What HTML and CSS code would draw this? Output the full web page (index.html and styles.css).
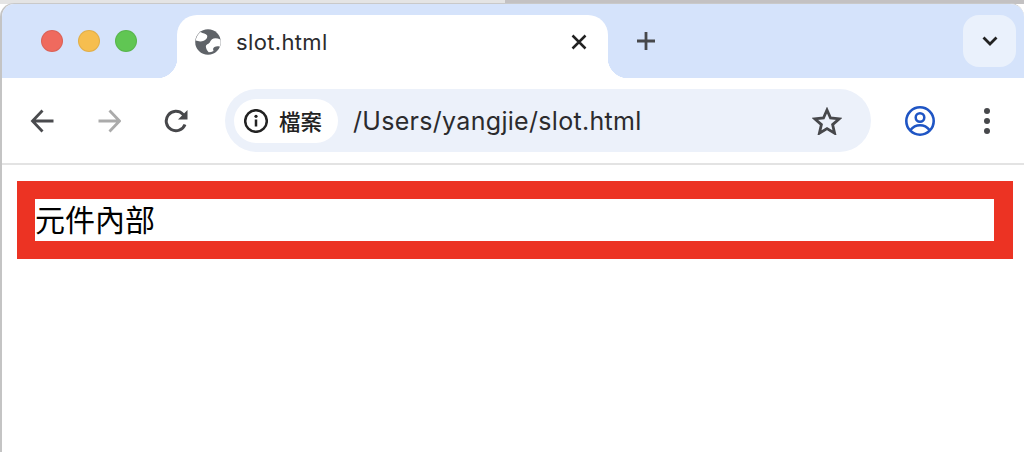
FILE: index.html
```html
<!DOCTYPE html>
<html lang="en">
<head>
    <meta charset="UTF-8">
    <meta name="viewport" content="width=device-width, initial-scale=1.0">
    <title>slot.html</title>
    <link rel="stylesheet" href="styles.css">
</head>
<body>
    <div class="desktop-edge"><span class="edge-light"></span><span class="edge-dark"></span></div>
    <div class="window">
        <div class="tabstrip">
            <div class="traffic">
                <span class="light red"></span>
                <span class="light yellow"></span>
                <span class="light green"></span>
            </div>
            <div class="tab">
                <svg class="globe" width="26" height="26" viewBox="0 0 26 26">
                    <circle cx="13" cy="13" r="12.8" fill="#5f6368"/>
                    <path d="M5.500 3c2.500 1.700 5.400 1.300 6.500 3.300 1 1.900-.8 4.600-3.200 5.500-2.500.9-5.300.8-8.100-.2C1.200 8 2.900 5 5.500 3z" fill="#fff"/>
                    <path d="M25.400 10.500c-3-1.400-6.400-1.700-8.400-.3-2 1.400-1.500 3.400-3.600 4.500-1.500.8-2.800 1.400-2.500 3.300.2 1.700 1.300 3.600 2.800 5.300 1.700-.1 3.300-.6 4.800-1.400-.7-1.800-.4-3 1-3.800 1.500-.9 3.500-1 5.300-.4 1-2.300 1.100-4.900.6-7.200z" fill="#fff"/>
                </svg>
                <span class="tab-title">slot.html</span>
                <svg class="tab-close" width="16" height="16" viewBox="0 0 16 16">
                    <path d="M1.500 1.500l13 13M14.500 1.500l-13 13" stroke="#222" stroke-width="2.500" fill="none"/>
                </svg>
            </div>
            <svg class="new-tab" width="20" height="20" viewBox="0 0 20 20">
                <path d="M10 1v18M1 10h18" stroke="#47484b" stroke-width="2.800" fill="none"/>
            </svg>
            <div class="tab-search">
                <svg width="16" height="10" viewBox="0 0 16 10">
                    <path d="M1.500 1.500L8 8l6.500-6.500" stroke="#222" stroke-width="2.800" fill="none"/>
                </svg>
            </div>
        </div>
        <div class="toolbar">
            <svg class="nav-btn" width="24" height="24" viewBox="0 0 24 24">
                <path d="M23.500 12H3M12.500 1.500L2.500 12l10 10.500" stroke="#4a4b4e" stroke-width="2.800" fill="none"/>
            </svg>
            <svg class="nav-btn" width="24" height="24" viewBox="0 0 24 24">
                <path d="M1.500 12H22M12.500 1.500l10 10.500-10 10.500" stroke="#ababab" stroke-width="2.800" fill="none"/>
            </svg>
            <svg class="nav-btn" width="24" height="24" viewBox="0 0 24 24">
                <path d="M21 15.500A9.700 9.700 0 1 1 18.900 5.300L21 7.800" stroke="#47484b" stroke-width="3" fill="none"/>
                <path d="M23.500 1V10.500h-9.500z" fill="#47484b"/>
            </svg>
            <div class="omnibox">
                <div class="site-chip">
                    <svg width="24" height="24" viewBox="0 0 24 24">
                        <circle cx="12" cy="12" r="10.800" stroke="#222" stroke-width="2.500" fill="none"/>
                        <path d="M12 10.500v7" stroke="#222" stroke-width="2.500"/>
                        <circle cx="12" cy="7.300" r="1.600" fill="#222"/>
                    </svg>
                    <span class="chip-label">檔案</span>
                </div>
                <span class="url">/Users/yangjie/slot.html</span>
                <svg class="star" width="30" height="28" viewBox="0 0 30 28">
                    <path d="M15 3l3.500 8 8.800.8-6.700 5.800 2 8.600L15 21.600l-7.600 4.600 2-8.600-6.700-5.800 8.800-.8z" stroke="#47484b" stroke-width="2.800" stroke-linejoin="miter" fill="none"/>
                </svg>
            </div>
            <svg class="profile" width="30" height="30" viewBox="0 0 30 30">
                <circle cx="15" cy="15" r="13.700" stroke="#1f55c4" stroke-width="2.600" fill="none"/>
                <circle cx="15" cy="11.500" r="4.300" stroke="#1f55c4" stroke-width="2.500" fill="none"/>
                <path d="M5.500 24c2.500-3.300 5.800-4.800 9.500-4.800s7 1.500 9.500 4.800" stroke="#1f55c4" stroke-width="2.500" fill="none"/>
            </svg>
            <div class="menu-dots"><span></span><span></span><span></span></div>
        </div>
        <main class="page">
            <div class="outer">
                <div class="inner">元件內部</div>
            </div>
        </main>
    </div>
</body>
</html>
```

FILE: styles.css
```css
html, body {
    margin: 0;
    padding: 0;
    height: 452px;
    overflow: hidden;
    background-color: #fff;
    font-family: "Liberation Sans", Arial, sans-serif;
}

.desktop-edge {
    display: flex;
    height: 4px;
    margin-bottom: -1px;
}

.edge-light {
    width: 505px;
    background-color: #e4e4e4;
}

.edge-dark {
    flex: 1;
    background-color: #c3c1c2;
}

.window {
    position: relative;
    height: 449px;
    box-sizing: border-box;
    border-top: 1px solid #c9c9c9;
    border-left: 2px solid #c4c4c4;
    border-radius: 14px 14px 0 0;
    overflow: hidden;
    background-color: #fff;
}

/* tabs */
.tabstrip {
    display: flex;
    align-items: flex-start;
    height: 74px;
    padding-top: 11px;
    box-sizing: border-box;
    background-color: #d5e3fb;
}

.traffic {
    display: flex;
    gap: 15px;
    width: 175px;
    padding: 15px 0 0 39px;
    box-sizing: border-box;
}

.light {
    width: 22px;
    height: 22px;
    border-radius: 50%;
    box-sizing: border-box;
    border: 1px solid rgba(0, 0, 0, 0.08);
}

.red { background-color: #ef6a5e; }
.yellow { background-color: #f6be4f; }
.green { background-color: #60c653; }

.tab {
    display: flex;
    align-items: center;
    width: 431px;
    height: 63px;
    padding: 0 21px 10px 18px;
    box-sizing: border-box;
    background-color: #fff;
    border-radius: 20px 20px 0 0;
    position: relative;
}

.tab::before, .tab::after {
    content: "";
    position: absolute;
    bottom: 0;
    width: 20px;
    height: 20px;
}

.tab::before {
    left: -20px;
    background: radial-gradient(circle at 0 0, #d5e3fb 20px, #fff 20.5px);
}

.tab::after {
    right: -20px;
    background: radial-gradient(circle at 100% 0, #d5e3fb 20px, #fff 20.5px);
}

.tab-title {
    flex: 1;
    margin-left: 15px;
    font-family: Inter, sans-serif;
    font-size: 22px;
    letter-spacing: 0.35px;
    color: #2b2b2d;
}

.new-tab {
    margin: 16px 0 0 28px;
}

.tab-search {
    display: flex;
    align-items: center;
    justify-content: center;
    width: 53px;
    height: 52px;
    margin-left: auto;
    margin-right: 8px;
    background-color: #eaf1fc;
    border-radius: 16px;
}

/* toolbar */
.toolbar {
    display: flex;
    align-items: center;
    height: 87px;
    padding-left: 28px;
    box-sizing: border-box;
    background-color: #fff;
    border-bottom: 2px solid #e3e3e3;
    border-radius: 20px 20px 0 0;
}

.nav-btn {
    margin-right: 43px;
}

.omnibox {
    display: flex;
    align-items: center;
    width: 646px;
    height: 63px;
    margin-left: -6px;
    padding-left: 9px;
    box-sizing: border-box;
    background-color: #ecf1fa;
    border-radius: 32px;
}

.site-chip {
    display: flex;
    align-items: center;
    gap: 11px;
    height: 44px;
    padding: 0 16px 0 10px;
    background-color: #fff;
    border-radius: 22px;
}

.chip-label {
    font-family: "Noto Sans CJK TC", sans-serif;
    font-size: 21.500px;
    font-weight: 500;
    color: #222;
}

.url {
    flex: 1;
    margin-left: 15px;
    font-family: Inter, sans-serif;
    font-size: 25px;
    letter-spacing: 0.3px;
    color: #2b2b2d;
}

.star {
    margin-right: 29px;
}

.profile {
    margin-left: 34px;
}

.menu-dots {
    display: flex;
    flex-direction: column;
    gap: 4px;
    margin-left: 49px;
}

.menu-dots span {
    width: 6px;
    height: 6px;
    border-radius: 50%;
    background-color: #47484b;
}

/* page content */
.page {
    padding: 16px 11px 0 15px;
}

.outer {
    padding: 18px 19px 18px 18px;
    background-color: #ec3323;
}

.inner {
    height: 42px;
    background-color: #fff;
    font-family: "Noto Sans CJK TC", sans-serif;
    font-size: 30px;
    line-height: 39px;
    color: #000;
}
```
